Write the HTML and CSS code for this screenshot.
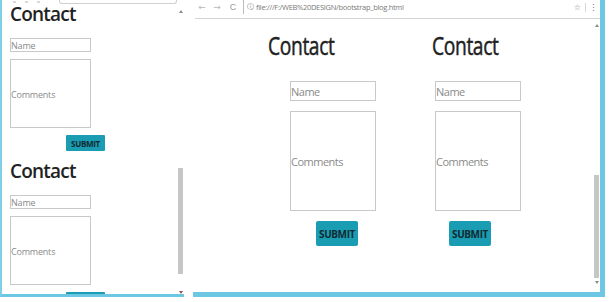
FILE: index.html
```html
<!DOCTYPE html>
<html lang="en">
<head>
  <meta charset="UTF-8">
  <title>Contact</title>
  <link rel="stylesheet" href="styles.css">
</head>
<body>

  <!-- small window on the left -->
  <div class="win win-small">
    <div class="viewport">
      <div class="page page-small">
        <div class="topstrip">
          <span class="dot"></span><span class="dot"></span><span class="dot"></span>
          <span class="addr-stub"></span>
        </div>
        <section class="contact">
          <h2>Contact</h2>
          <input class="field" type="text" placeholder="Name">
          <textarea class="area" placeholder="Comments"></textarea>
          <button class="submit">SUBMIT</button>
        </section>
        <section class="contact">
          <h2>Contact</h2>
          <input class="field" type="text" placeholder="Name">
          <textarea class="area" placeholder="Comments"></textarea>
          <button class="submit">SUBMIT</button>
        </section>
      </div>
      <div class="scrollbar">
        <span class="arrow up"></span>
        <span class="thumb"></span>
        <span class="arrow down"></span>
      </div>
    </div>
  </div>

  <!-- big window on the right -->
  <div class="win win-big">
    <div class="toolbar">
      <span class="nav">&#8592;</span>
      <span class="nav">&#8594;</span>
      <span class="nav reload">C</span>
      <div class="omnibox">
        <span class="info">&#9432;</span>
        <span class="url">file:///F:/WEB%20DESIGN/bootstrap_blog.html</span>
        <span class="star">&#9734;</span>
      </div>
      <span class="menu">&#8942;</span>
    </div>
    <div class="viewport">
      <div class="page page-big">
        <section class="contact col-one">
          <h2>Contact</h2>
          <input class="field" type="text" placeholder="Name">
          <textarea class="area" placeholder="Comments"></textarea>
          <button class="submit">SUBMIT</button>
        </section>
        <section class="contact col-two">
          <h2>Contact</h2>
          <input class="field" type="text" placeholder="Name">
          <textarea class="area" placeholder="Comments"></textarea>
          <button class="submit">SUBMIT</button>
        </section>
      </div>
      <div class="scrollbar">
        <span class="arrow up"></span>
        <span class="thumb"></span>
        <span class="arrow down"></span>
      </div>
    </div>
  </div>

</body>
</html>
```

FILE: styles.css
```css
body {
  margin: 0;
  width: 610px;
  height: 302px;
  overflow: hidden;
  background: #ffffff;
  font-family: 'Open Sans', sans-serif;
  position: relative;
}

.win {
  position: absolute;
  top: 0;
  background: #ffffff;
  display: flex;
  flex-direction: column;
}

/* left window */
.win-small {
  left: 0;
  width: 181px;
  height: 294px;
  border-left: 2px solid #7fd0e6;
  border-bottom: 3px solid #6cc8e2;
  padding-left: 1px;
}

.topstrip {
  height: 4px;
  display: flex;
  align-items: flex-start;
  gap: 9px;
  padding-left: 3px;
}

.dot {
  width: 3px;
  height: 2px;
  background: #d8d8d8;
  margin-top: 1px;
}

.addr-stub {
  width: 118px;
  height: 3px;
  margin-left: 10px;
  border: 1px solid #d0d0d0;
  border-top: none;
  border-radius: 0 0 3px 3px;
}

.viewport {
  flex: 1;
  display: flex;
  overflow: hidden;
}

.page {
  flex: 1;
  overflow: hidden;
}

.scrollbar {
  width: 7px;
  display: flex;
  flex-direction: column;
  align-items: center;
}

.thumb {
  width: 5px;
  background: #c6c6c6;
}

.arrow {
  width: 0;
  height: 0;
  border-left: 2px solid transparent;
  border-right: 2px solid transparent;
}

.arrow.up {
  border-bottom: 3px solid #8a8a8a;
}

.arrow.down {
  border-top: 3px solid #8a8a8a;
}

.win-small .arrow.up {
  margin-top: 10px;
}

.win-small .thumb {
  margin-top: 155px;
  height: 106px;
}

.win-small .arrow.down {
  margin-top: 17px;
  border-top-color: #a05050;
}

/* form pieces */
.contact h2 {
  margin: 0;
  color: #222222;
}

.field,
.area {
  display: block;
  box-sizing: border-box;
  border: 1px solid #c9c9c9;
  background: #ffffff;
  padding: 0;
  font-family: 'Open Sans', sans-serif;
  color: #888888;
  resize: none;
}

.field::placeholder,
.area::placeholder {
  color: #8a8a8a;
}

.submit {
  display: block;
  border: none;
  background: #1a9db2;
  color: #102a33;
  font-family: 'Open Sans', sans-serif;
  font-weight: 700;
  padding: 0;
}

.page-small {
  padding-left: 7px;
}

.page-small .contact h2 {
  font-size: 19px;
  font-weight: 600;
  line-height: 20px;
  height: 20px;
  letter-spacing: -0.8px;
}

.page-small .contact + .contact h2 {
  margin-top: 10px;
}

.page-small .field {
  width: 81px;
  height: 14px;
  margin-top: 14px;
  font-size: 9px;
  letter-spacing: -0.2px;
}

.page-small .area {
  width: 81px;
  height: 69px;
  margin-top: 7px;
  font-size: 9px;
  padding-top: 28px;
  letter-spacing: -0.2px;
}

.page-small .submit {
  width: 39px;
  height: 16px;
  margin-top: 7px;
  margin-left: 56px;
  font-size: 8px;
  letter-spacing: -0.3px;
  border-radius: 1px;
}

/* right window */
.win-big {
  left: 193px;
  width: 407px;
  height: 292px;
  border-right: 5px solid #6cc8e2;
  border-bottom: 5px solid #6cc8e2;
}

.toolbar {
  height: 18px;
  border-bottom: 1px solid #d4d4d4;
  margin-left: 2px;
  display: flex;
  align-items: center;
  color: #b8b8b8;
  font-size: 10px;
}

.nav {
  width: 14px;
  text-align: center;
  margin-left: 1px;
  margin-top: -4px;
  font-family: 'DejaVu Sans', sans-serif;
  font-size: 9px;
}

.nav:first-child {
  margin-left: 0;
}

.reload {
  font-family: 'Liberation Sans', sans-serif;
  font-size: 9px;
  margin-left: 2px;
  color: #999999;
}

.omnibox {
  flex: 1;
  height: 14px;
  margin-left: 3px;
  margin-top: -4px;
  border-left: 1px solid #bbbbbb;
  display: flex;
  align-items: center;
  gap: 2px;
  padding-left: 3px;
  color: #7a7a7a;
  font-size: 7.5px;
}

.info {
  font-family: 'DejaVu Sans', sans-serif;
  font-size: 7px;
}

.url {
  flex: 1;
  letter-spacing: -0.3px;
}

.star {
  font-family: 'DejaVu Sans', sans-serif;
  font-size: 8px;
  padding-right: 4px;
  border-right: 1px solid #d8d8d8;
}

.menu {
  width: 14px;
  text-align: center;
  color: #777777;
  font-size: 9px;
  margin-top: -4px;
}

.page-big {
  display: flex;
}

.win-big .arrow.up {
  margin-top: 5px;
}

.win-big .thumb {
  margin-top: 148px;
  height: 103px;
}

.win-big .arrow.down {
  margin-top: 3px;
}

.page-big .contact h2 {
  font-size: 26px;
  font-weight: 400;
  line-height: 26px;
  height: 26px;
  margin-top: 13px;
  letter-spacing: -0.5px;
  transform: scaleX(0.74);
  transform-origin: left center;
  -webkit-text-stroke: 0.5px #222222;
}

.page-big .field {
  width: 86px;
  height: 20px;
  margin-top: 23px;
  font-size: 11px;
  letter-spacing: -0.5px;
}

.page-big .area {
  width: 86px;
  height: 100px;
  margin-top: 10px;
  font-size: 11px;
  padding-top: 42px;
  letter-spacing: -0.5px;
}

.page-big .submit {
  width: 42px;
  height: 25px;
  margin-top: 10px;
  font-size: 10px;
  border-radius: 2px;
  letter-spacing: -0.4px;
}

.col-one {
  margin-left: 75px;
}

.col-one .field,
.col-one .area {
  margin-left: 22px;
}

.col-one .submit {
  margin-left: 48px;
}

.col-two {
  margin-left: 59px;
}

.col-two h2 {
  margin-left: -3px;
}

.col-two .submit {
  margin-left: 14px;
}
```
